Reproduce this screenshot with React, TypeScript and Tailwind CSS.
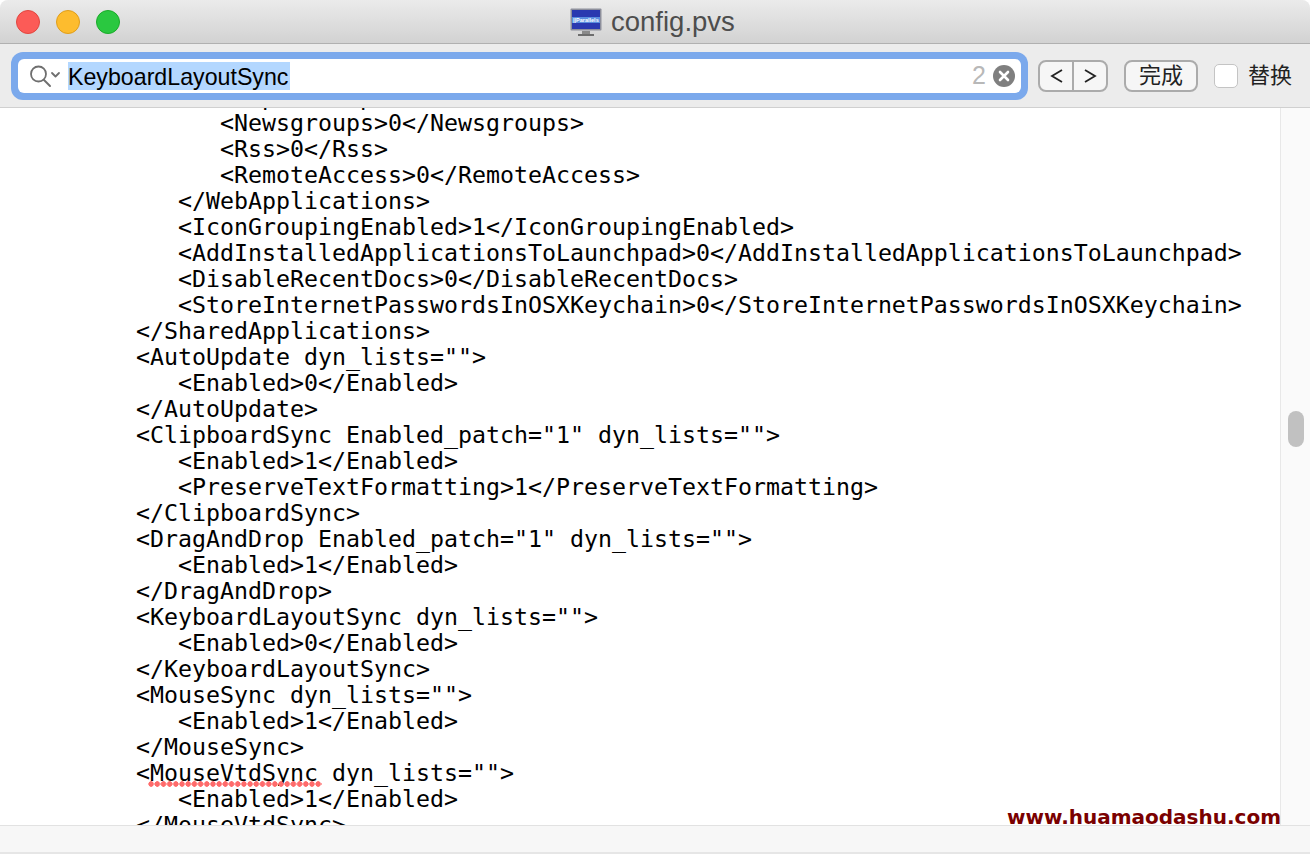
const lines: [number, string][] = [
  [6, "<Ftp>0</Ftp>"],
  [6, "<Newsgroups>0</Newsgroups>"],
  [6, "<Rss>0</Rss>"],
  [6, "<RemoteAccess>0</RemoteAccess>"],
  [3, "</WebApplications>"],
  [3, "<IconGroupingEnabled>1</IconGroupingEnabled>"],
  [3, "<AddInstalledApplicationsToLaunchpad>0</AddInstalledApplicationsToLaunchpad>"],
  [3, "<DisableRecentDocs>0</DisableRecentDocs>"],
  [3, "<StoreInternetPasswordsInOSXKeychain>0</StoreInternetPasswordsInOSXKeychain>"],
  [0, "</SharedApplications>"],
  [0, '<AutoUpdate dyn_lists="">'],
  [3, "<Enabled>0</Enabled>"],
  [0, "</AutoUpdate>"],
  [0, '<ClipboardSync Enabled_patch="1" dyn_lists="">'],
  [3, "<Enabled>1</Enabled>"],
  [3, "<PreserveTextFormatting>1</PreserveTextFormatting>"],
  [0, "</ClipboardSync>"],
  [0, '<DragAndDrop Enabled_patch="1" dyn_lists="">'],
  [3, "<Enabled>1</Enabled>"],
  [0, "</DragAndDrop>"],
  [0, '<KeyboardLayoutSync dyn_lists="">'],
  [3, "<Enabled>0</Enabled>"],
  [0, "</KeyboardLayoutSync>"],
  [0, '<MouseSync dyn_lists="">'],
  [3, "<Enabled>1</Enabled>"],
  [0, "</MouseSync>"],
];

const sans = "font-['Liberation_Sans','Noto_Sans_CJK_SC',sans-serif]";

export default function App() {
  return (
    <div className="w-[1310px] h-[854px] overflow-hidden bg-[#f6f6f6] flex flex-col relative rounded-t-[8px]">
      {/* Title bar */}
      <div className="h-[44px] shrink-0 bg-gradient-to-b from-[#ebebeb] to-[#d2d2d2] border-b border-[#b0b0b0] flex items-center relative">
        <div className="flex items-center gap-[16px] pl-[16px]">
          <div className="w-[24px] h-[24px] rounded-full bg-[#fc5b57] border border-[#e2463f]" />
          <div className="w-[24px] h-[24px] rounded-full bg-[#fdbc2e] border border-[#e09e1a]" />
          <div className="w-[24px] h-[24px] rounded-full bg-[#2ac840] border border-[#1aab29]" />
        </div>
        <div className="absolute left-[570px] top-[7px] flex items-center gap-[9px]">
          <svg width="32" height="29" viewBox="0 0 32 29">
            <rect x="0.5" y="0.5" width="31" height="22" rx="1" fill="#8d8f9b" />
            <rect x="2" y="2" width="28" height="19" fill="#2a39b0" />
            <rect x="2" y="9" width="28" height="6" fill="#5a8ee0" />
            <text x="3" y="14" fontSize="5.5" fill="#ffffff" fontFamily="Liberation Sans" fontWeight="700">||Parallels</text>
            <rect x="12" y="23" width="8" height="3" fill="#8a8a8a" />
            <rect x="8" y="26" width="16" height="2" fill="#6e6e6e" />
          </svg>
          <span className={`${sans} text-[27.5px] leading-[30px] text-[#4d4d4d]`}>config.pvs</span>
        </div>
      </div>

      {/* Find bar */}
      <div className="h-[64px] shrink-0 bg-[#ececec] border-b border-[#d0d0d0] flex items-center pl-[11px] pr-[17px]">
        <div className="w-[1017px] h-[48px] rounded-[12px] bg-[#7ba9ec] p-[7px] shrink-0">
          <div className="h-full bg-white rounded-[6px] flex items-center pl-[11px] pr-[6px]">
            <svg width="34" height="26" viewBox="0 0 34 26" fill="none" stroke="#6f6f6f" strokeLinecap="round" strokeLinejoin="round">
              <circle cx="9.5" cy="11" r="7.5" strokeWidth="1.8" />
              <path d="M15 17l6 6" strokeWidth="2" />
              <path d="M23 10l3.5 3.5 3.5-3.5" strokeWidth="1.8" />
            </svg>
            <span className={`${sans} bg-[#b3d7ff] ml-[5px] h-[28px] pt-[1px] leading-[28px] text-[23.2px] text-black w-[222px] whitespace-nowrap`}>KeyboardLayoutSync</span>
            <span className={`${sans} ml-auto text-[25px] leading-none text-[#b8b8b8]`}>2</span>
            <div className="ml-[7px] w-[22px] h-[22px] rounded-full bg-[#7f7f7f] flex items-center justify-center">
              <svg width="12" height="12" viewBox="0 0 12 12" stroke="#ffffff" strokeWidth="2.6" strokeLinecap="round">
                <path d="M2 2l8 8M10 2l-8 8" />
              </svg>
            </div>
          </div>
        </div>
        <div className="ml-[10px] w-[70px] h-[32px] rounded-[8px] border-2 border-[#ababab] bg-[#f6f6f6] flex shrink-0">
          <div className="w-[34px] border-r-2 border-[#ababab] flex items-center justify-center">
            <svg width="13" height="16" viewBox="0 0 13 16" fill="none" stroke="#222" strokeWidth="1.8"><path d="M12 2L2 8l10 6" /></svg>
          </div>
          <div className="flex-1 flex items-center justify-center">
            <svg width="13" height="16" viewBox="0 0 13 16" fill="none" stroke="#222" strokeWidth="1.8"><path d="M1 2l10 6-10 6" /></svg>
          </div>
        </div>
        <div className={`${sans} ml-[16px] w-[74px] h-[32px] rounded-[8px] border-2 border-[#ababab] bg-[#f6f6f6] flex items-center justify-center text-[22px] text-[#222] shrink-0`}>完成</div>
        <div className="ml-[16px] w-[24px] h-[24px] rounded-[5px] border border-[#c4c4c4] bg-white shrink-0" />
        <div className={`${sans} ml-[10px] text-[22px] text-[#222] whitespace-nowrap`}>替换</div>
      </div>

      {/* Text + scrollbar */}
      <div className="flex-1 min-h-0 flex relative">
        <div className="flex-1 bg-white overflow-hidden relative">
          <div className="-mt-[24px] pl-[136px] font-['DejaVu_Sans_Mono',monospace] text-[23.25px] leading-[26px] text-black whitespace-pre">
            {lines.map(([indent, text], i) => (
              <div key={i}>{" ".repeat(indent) + text}</div>
            ))}
            <div>
              {"<"}
              <span className="relative">
                MouseVtdSync
                <span className="absolute left-[-2px] right-[-4px] top-[22px] h-[6px] bg-[radial-gradient(circle,#ff6b6b_2.5px,transparent_3px)] bg-[length:6.2px_6px]" />
              </span>
              {' dyn_lists="">'}
            </div>
            <div>{"   <Enabled>1</Enabled>"}</div>
            <div>{"</MouseVtdSync>"}</div>
          </div>
        </div>
        <div className="w-[30px] bg-[#fafafa] border-l border-[#e8e8e8] flex justify-center shrink-0">
          <div className="mt-[303px] w-[16px] h-[36px] rounded-full bg-[#c1c1c1]" />
        </div>
        <div className="absolute left-[1007px] bottom-[-5px] text-[20px] leading-[26px] font-['DejaVu_Sans',sans-serif] font-bold text-[#7a0000] whitespace-nowrap">www.huamaodashu.com</div>
      </div>

      {/* Status bar */}
      <div className="h-[29px] shrink-0 bg-[#f7f7f7] border-t border-[#e2e2e2] border-b-2 border-b-[#e6e6e6]" />
    </div>
  );
}
